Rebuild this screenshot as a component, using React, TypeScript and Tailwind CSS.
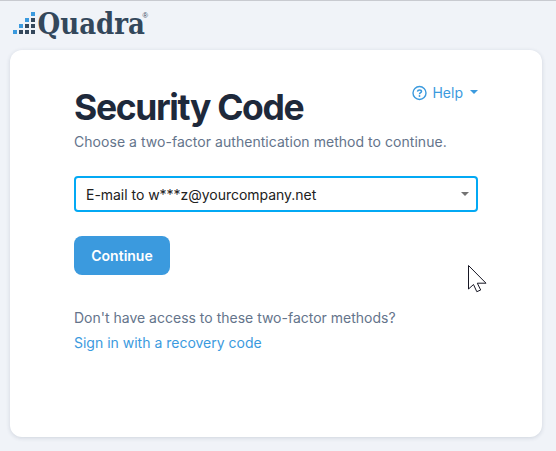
const blueSquares = [[0, 18], [6, 12], [12, 6], [18, 0]];
const darkSquares = [[6, 18], [12, 12], [12, 18], [18, 6], [18, 12], [18, 18]];

const Logo = () => (
  <svg width="138" height="40" viewBox="0 0 138 40" role="img" aria-label="Quadra" className="overflow-visible">
    {blueSquares.map(([x, y]) => (
      <rect key={`${x}-${y}`} x={x} y={y + 11} width="4" height="4" fill="#3b9ade" />
    ))}
    {darkSquares.map(([x, y]) => (
      <rect key={`${x}-${y}`} x={x} y={y + 11} width="4" height="4" fill="#33475b" />
    ))}
    <text
      x="24.5"
      y="32.5"
      textLength="107.5"
      lengthAdjust="spacingAndGlyphs"
      fill="#33475b"
      className="font-['DejaVu_Serif_Condensed','DejaVu_Serif',serif] text-[29px] font-bold"
    >
      Quadra
    </text>
    <text x="129.5" y="17" fill="#33475b" className="font-['Liberation_Sans',sans-serif] text-[7.5px]">
      ®
    </text>
  </svg>
);

const HelpMenu = () => (
  <button className="mt-[3px] flex h-5 items-center text-[14px] leading-5 text-[#3b9ade]">
    <svg width="16" height="16" viewBox="0 0 16 16" fill="none" className="mr-[5px]">
      <circle cx="8.5" cy="8" r="6.5" stroke="currentColor" strokeWidth="1.4" />
      <path d="M6.5 6.6c.1-1.2.9-1.7 2-1.7s2 .6 2 1.6C10.5 7.7 8.5 7.7 8.5 9.2" stroke="currentColor" strokeWidth="1.5" />
      <circle cx="8.5" cy="11" r=".9" fill="currentColor" />
    </svg>
    Help
    <span className="mb-0.5 ml-[7px] border-x-4 border-t-4 border-x-transparent border-t-[#3b9ade]" />
  </button>
);

const Cursor = () => (
  <svg className="absolute left-[468px] top-[263px]" width="20" height="30" viewBox="0 0 20 30">
    <path
      d="M.5 1.5V25l5-4.5 3.3 7.2 3.9-1.7-3.4-6.8h8.7z"
      fill="#fff"
      stroke="#171724"
      strokeWidth="1"
    />
  </svg>
);

const App = () => {
  return (
    <div className="relative h-[451px] w-[556px] overflow-hidden border-t border-[#c8cad0] bg-[#f0f3f8] font-['Inter',sans-serif] text-[14px]">
      <header className="h-[49px] pl-[13px]">
        <Logo />
      </header>

      <main className="ml-[10px] h-[387px] w-[532px] rounded-xl bg-white px-16 pt-[30px] shadow-[0_1px_4px_rgba(30,50,80,0.16)]">
        <div className="flex h-[50px] items-start justify-between">
          <h1 className="mt-1.5 whitespace-nowrap text-[35.5px] font-bold leading-[44px] tracking-[-1.35px] text-[#1e293b]">
            Security Code
          </h1>
          <HelpMenu />
        </div>
        <p className="leading-6 tracking-[0.04px] text-[#64748b]">
          Choose a two-factor authentication method to continue.
        </p>

        <button className="mt-[22px] flex h-9 w-[404px] items-center justify-between rounded border-2 border-[#03a9f4] pl-[10px] pr-[7px] text-[#212121]">
          <span className="tracking-[-0.03px]">E-mail to w***z@yourcompany.net</span>
          <span className="border-x-4 border-t-4 border-x-transparent border-t-[#737373]" />
        </button>

        <button className="mt-6 h-[39px] w-24 rounded-lg bg-[#3b9ade] font-semibold text-white">Continue</button>

        <div className="mt-[30px] leading-[25px]">
          <p className="text-[#64748b]">Don't have access to these two-factor methods?</p>
          <a href="#" className="text-[#3b9ade]">Sign in with a recovery code</a>
        </div>
      </main>

      <Cursor />
    </div>
  );
};

export default App;
